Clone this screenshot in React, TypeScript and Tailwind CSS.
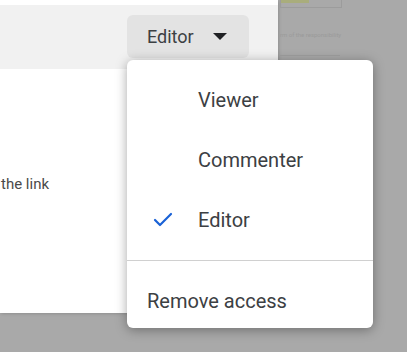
import { Check } from "lucide-react";

const items = [
  { label: "Viewer", checked: false },
  { label: "Commenter", checked: false },
  { label: "Editor", checked: true },
];

export default function App() {
  return (
    <div className="relative h-[352px] w-[407px] overflow-hidden bg-[#a9a9a9] [font-family:Roboto,'Liberation_Sans',sans-serif]">
      <div className="flex h-full">
        <div className="flex h-[313px] w-[278px] shrink-0 flex-col bg-white shadow-[1px_1px_3px_rgba(0,0,0,0.15)]">
          <div className="h-[5px] bg-white" />
          <div className="h-[64px] bg-[#f1f1f1] pl-[127px] pt-[10px]">
            <button className="flex h-[43px] w-[122px] items-center rounded-[6px] bg-[#e3e3e3] pl-[20px] text-[18px] text-[#3c4043]">
              Editor
              <svg className="ml-[19px]" width="14" height="8" viewBox="0 0 14 8">
                <path d="M0 0h14L7 7z" fill="#202124" />
              </svg>
            </button>
          </div>
          <div className="pt-[105px] pl-px text-[15px] leading-[20px] text-[#4a4a4a]">
            the link
          </div>
        </div>

        <div className="flex flex-1 flex-col">
          <div className="ml-[2px] flex h-[8px] w-[62px] items-start border-x border-b border-[#9c9c9c]">
            <div className="h-[3px] w-[28px] bg-[#a9ad7c]" />
          </div>
          <p className="mt-[22px] pl-[2px] text-[6px] text-[#9a9a9a]">rm of the responsibility</p>
          <div className="mt-[16px] ml-[2px] h-px w-[60px] bg-[#9e9e9e]" />
        </div>
      </div>

      <div className="absolute left-[127px] top-[60px] flex h-[268px] w-[246px] flex-col rounded-[6px] bg-white pt-[10px] shadow-[0_2px_12px_rgba(0,0,0,0.35)]">
        {items.map((item) => (
          <div
            key={item.label}
            className="flex h-[60px] items-center text-[20px] text-[#3c4043]"
          >
            <span className="flex w-[71px] justify-end pr-[23px]">
              {item.checked && (
                <Check className="h-[24px] w-[24px] text-[#1a62d6]" strokeWidth={2.2} />
              )}
            </span>
            {item.label}
          </div>
        ))}
        <div className="mt-[10px] h-px bg-[#d0d0d0]" />
        <div className="flex flex-1 items-center pl-[20px] pt-[12px] text-[20px] text-[#3c4043]">
          Remove access
        </div>
      </div>
    </div>
  );
}
